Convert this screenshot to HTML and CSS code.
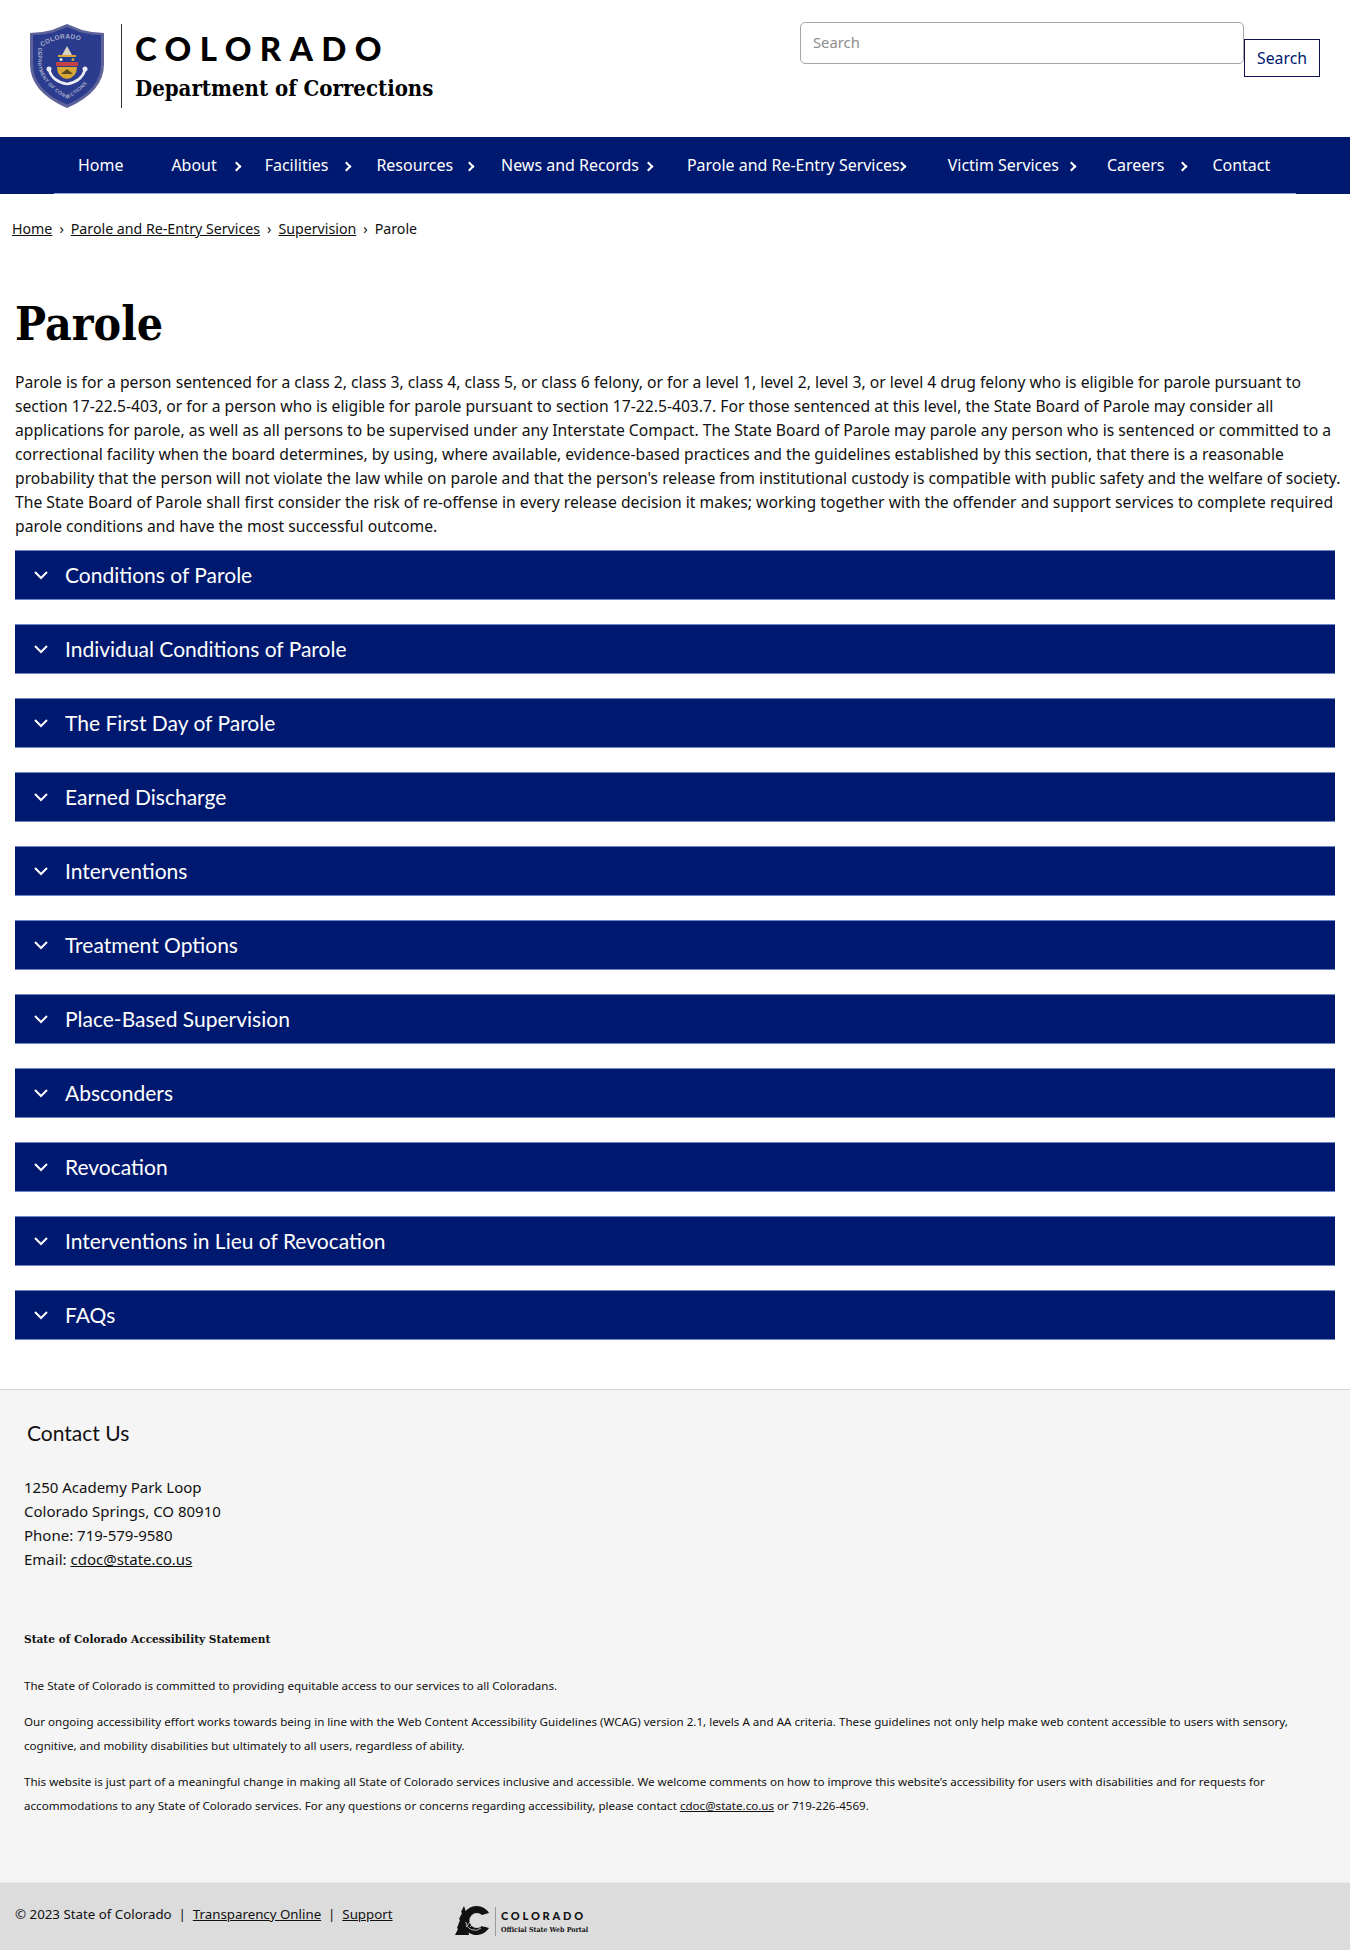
FILE: index.html
```html
<!DOCTYPE html>
<html lang="en">
<head>
<meta charset="utf-8">
<title>Parole | Colorado Department of Corrections</title>
<link rel="stylesheet" href="styles.css">
</head>
<body>
<header class="site-header">
  <a class="brand" href="#">
    <svg class="seal" viewBox="0 0 74 84" aria-hidden="true">
      <defs>
        <path id="seal-top" d="M9 25 Q37 4 65 25"/>
        <path id="seal-bottom" d="M8 24 V40 Q10 60 37 75 Q64 60 66 40 V24"/>
      </defs>
      <path d="M37 0 L52 6 Q63 9 74 9 V40 Q74 68 37 84 Q0 68 0 40 V9 Q11 9 22 6 Z" fill="#5d6398"/>
      <path d="M37 3 L51 8.500 Q62 11 71 11 V40 Q71 66 37 80.500 Q3 66 3 40 V11 Q12 11 23 8.500 Z" fill="#2b3b8d"/>
      <text class="seal-text"><textPath href="#seal-top" startOffset="6%">COLORADO</textPath></text>
      <text class="seal-text seal-small"><textPath href="#seal-bottom">DEPARTMENT OF CORRECTIONS</textPath></text>
      <path d="M37 22 L42 31 H32 Z" fill="#d8d2c0"/>
      <rect x="28" y="31" width="18" height="2" fill="#d7a33a"/>
      <rect x="26" y="33" width="22" height="5" fill="#1f3a92"/>
      <circle cx="31" cy="35.500" r="1.500" fill="#e9e5d8"/>
      <circle cx="43" cy="35.500" r="1.500" fill="#c9a33c"/>
      <rect x="26" y="38" width="22" height="4" fill="#c24246"/>
      <path d="M27 43 H47 Q47 53 37 55 Q27 53 27 43 Z" fill="#d9a735"/>
      <path d="M31 50 L37 45 L43 50 Z" fill="#5a4a22"/>
      <path d="M19 46 Q23 58 37 60 Q51 58 55 46" fill="none" stroke="#ecedf2" stroke-width="2.500"/>
      <circle cx="19" cy="45" r="2.500" fill="#ecedf2"/>
      <circle cx="55" cy="45" r="2.500" fill="#ecedf2"/>
    </svg>
    <span class="brand-text">
      <span class="brand-state">COLORADO</span>
      <span class="brand-dept">Department of Corrections</span>
    </span>
  </a>
  <form class="search">
    <input class="search-input" type="text" placeholder="Search">
    <button class="search-btn" type="button">Search</button>
  </form>
</header>

<nav class="main-nav">
  <ul class="nav-list">
    <li class="nav-item"><a href="#">Home</a></li>
    <li class="nav-item has-sub"><a href="#">About</a></li>
    <li class="nav-item has-sub"><a href="#">Facilities</a></li>
    <li class="nav-item has-sub"><a href="#">Resources</a></li>
    <li class="nav-item has-sub"><a href="#">News and Records</a></li>
    <li class="nav-item has-sub"><a href="#">Parole and Re-Entry Services</a></li>
    <li class="nav-item has-sub"><a href="#">Victim Services</a></li>
    <li class="nav-item has-sub"><a href="#">Careers</a></li>
    <li class="nav-item"><a href="#">Contact</a></li>
  </ul>
</nav>

<ol class="breadcrumb">
  <li><a href="#">Home</a></li>
  <li><a href="#">Parole and Re-Entry Services</a></li>
  <li><a href="#">Supervision</a></li>
  <li>Parole</li>
</ol>

<main class="content">
  <h1 class="page-title">Parole</h1>
  <p class="intro">Parole is for a person sentenced for a class 2, class 3, class 4, class 5, or class 6 felony, or for a level 1, level 2, level 3, or level 4 drug felony who is eligible for parole pursuant to section 17-22.5-403, or for a person who is eligible for parole pursuant to section 17-22.5-403.7. For those sentenced at this level, the State Board of Parole may consider all applications for parole, as well as all persons to be supervised under any Interstate Compact. The State Board of Parole may parole any person who is sentenced or committed to a correctional facility when the board determines, by using, where available, evidence-based practices and the guidelines established by this section, that there is a reasonable probability that the person will not violate the law while on parole and that the person's release from institutional custody is compatible with public safety and the welfare of society. The State Board of Parole shall first consider the risk of re-offense in every release decision it makes; working together with the offender and support services to complete required parole conditions and have the most successful outcome.</p>
  <div class="accordion">
    <div class="acc-row"><svg class="acc-icon" viewBox="0 0 14 9"><path d="M1 1 L7 7 L13 1"/></svg>Conditions of Parole</div>
    <div class="acc-row"><svg class="acc-icon" viewBox="0 0 14 9"><path d="M1 1 L7 7 L13 1"/></svg>Individual Conditions of Parole</div>
    <div class="acc-row"><svg class="acc-icon" viewBox="0 0 14 9"><path d="M1 1 L7 7 L13 1"/></svg>The First Day of Parole</div>
    <div class="acc-row"><svg class="acc-icon" viewBox="0 0 14 9"><path d="M1 1 L7 7 L13 1"/></svg>Earned Discharge</div>
    <div class="acc-row"><svg class="acc-icon" viewBox="0 0 14 9"><path d="M1 1 L7 7 L13 1"/></svg>Interventions</div>
    <div class="acc-row"><svg class="acc-icon" viewBox="0 0 14 9"><path d="M1 1 L7 7 L13 1"/></svg>Treatment Options</div>
    <div class="acc-row"><svg class="acc-icon" viewBox="0 0 14 9"><path d="M1 1 L7 7 L13 1"/></svg>Place-Based Supervision</div>
    <div class="acc-row"><svg class="acc-icon" viewBox="0 0 14 9"><path d="M1 1 L7 7 L13 1"/></svg>Absconders</div>
    <div class="acc-row"><svg class="acc-icon" viewBox="0 0 14 9"><path d="M1 1 L7 7 L13 1"/></svg>Revocation</div>
    <div class="acc-row"><svg class="acc-icon" viewBox="0 0 14 9"><path d="M1 1 L7 7 L13 1"/></svg>Interventions in Lieu of Revocation</div>
    <div class="acc-row"><svg class="acc-icon" viewBox="0 0 14 9"><path d="M1 1 L7 7 L13 1"/></svg>FAQs</div>
  </div>
</main>

<footer class="site-footer">
  <section class="footer-main">
    <h2 class="contact-title">Contact Us</h2>
    <address class="contact">
      1250 Academy Park Loop<br>
      Colorado Springs, CO 80910<br>
      Phone: 719-579-9580<br>
      Email: <a href="#">cdoc@state.co.us</a>
    </address>
    <h3 class="a11y-title">State of Colorado Accessibility Statement</h3>
    <p class="a11y">The State of Colorado is committed to providing equitable access to our services to all Coloradans.</p>
    <p class="a11y">Our ongoing accessibility effort works towards being in line with the Web Content Accessibility Guidelines (WCAG) version 2.1, levels A and AA criteria. These guidelines not only help make web content accessible to users with sensory, cognitive, and mobility disabilities but ultimately to all users, regardless of ability.</p>
    <p class="a11y">This website is just part of a meaningful change in making all State of Colorado services inclusive and accessible. We welcome comments on how to improve this website’s accessibility for users with disabilities and for requests for accommodations to any State of Colorado services. For any questions or concerns regarding accessibility, please contact <a href="#">cdoc@state.co.us</a> or 719-226-4569.</p>
  </section>
  <section class="footer-bar">
    <p class="legal">© 2023 State of Colorado &nbsp;|&nbsp; <a href="#">Transparency Online</a> &nbsp;|&nbsp; <a href="#">Support</a></p>
    <a class="portal" href="#">
      <svg class="portal-mark" viewBox="0 0 34 30" aria-hidden="true">
        <path d="M9 0 L11 6 L10 7 L13 13 L12 14 L14 29 H0 L3 23 L2 22 L5 14 L4 13 L7 7 L6 6 Z" fill="#111"/>
        <path d="M34 7 A14.500 14.500 0 1 0 34 22 L27 20 A7.500 7.500 0 1 1 27 9 Z" fill="#111"/>
        <path d="M11 21 L20 10 L29 21 M15 21 L23 12 M11 16 A9 9 0 0 0 26 22" fill="none" stroke="#e6e6e6" stroke-width="0.800"/>
      </svg>
      <span class="portal-text">
        <span class="portal-state">COLORADO</span>
        <span class="portal-sub">Official State Web Portal</span>
      </span>
    </a>
  </section>
</footer>
</body>
</html>
```
FILE: styles.css
```css
* { box-sizing: border-box; }
html, body { margin: 0; padding: 0; }
body {
  font-family: "Noto Sans", "Open Sans", sans-serif;
  font-size: 16px;
  line-height: 24px;
  color: #111;
  background: #fff;
}
a { color: inherit; }

.site-header {
  height: 137px;
  display: flex;
  justify-content: space-between;
  align-items: flex-start;
  padding: 22px 30px 0 30px;
}
.brand {
  display: flex;
  align-items: stretch;
  text-decoration: none;
  color: #000;
  padding-top: 2px;
}
.seal { width: 74px; height: 84px; display: block; }
.seal-text { font: 700 6.5px "Liberation Sans", sans-serif; fill: #a9adc9; letter-spacing: .3px; }
.seal-small { font-size: 5px; }
.brand-text {
  display: flex;
  flex-direction: column;
  margin-left: 17px;
  padding-left: 13px;
  border-left: 1.5px solid #333;
  height: 84px;
}
.brand-state {
  font-family: "Lato", sans-serif;
  font-weight: 900;
  font-size: 33px;
  line-height: 40px;
  letter-spacing: 8.4px;
  margin-top: 4px;
}
.brand-dept {
  font-family: "DejaVu Serif Condensed", "DejaVu Serif", serif;
  font-weight: 700;
  font-size: 22px;
  line-height: 28px;
  margin-top: 6px;
}
.search { display: flex; align-items: flex-start; }
.search-input {
  width: 444px;
  height: 42px;
  border: 1px solid #a6a6ad;
  border-radius: 5px;
  padding: 0 12px 2px;
  font: 14.8px "Noto Sans", sans-serif;
  background: #fff;
}
.search-input::placeholder { color: #8e8e8e; opacity: 1; }
.search-btn {
  width: 76px;
  height: 38px;
  margin-top: 17px;
  border: 1px solid #10124f;
  background: #fff;
  color: #001970;
  font: 15.8px "Noto Sans", sans-serif;
  padding: 0;
}

.main-nav {
  height: 57px;
  background: #001970;
}
.nav-list {
  list-style: none;
  margin: 0 54px;
  padding: 0;
  height: 57px;
  display: flex;
  border-bottom: 1px solid #8fa6d8;
  font-size: 15.96px;
}
.nav-item {
  position: relative;
  flex: none;
  white-space: nowrap;
  padding: 0 24px;
  line-height: 56px;
}
.nav-item a { color: #fff; text-decoration: none; }
.has-sub::after {
  content: "";
  position: absolute;
  left: calc(89.4% + 2px);
  top: 26px;
  width: 5px;
  height: 5px;
  border-top: 2px solid #fff;
  border-right: 2px solid #fff;
  transform: rotate(45deg);
}

.breadcrumb {
  list-style: none;
  margin: 0;
  padding: 24px 0 0 12px;
  display: flex;
  font-size: 14.2px;
  line-height: 22px;
}
.breadcrumb li + li::before {
  content: "›";
  margin: 0 7px;
}

.content { padding: 0 15px; }
.page-title {
  font-family: "DejaVu Serif Condensed", "DejaVu Serif", serif;
  font-weight: 700;
  font-size: 46px;
  line-height: 56px;
  margin: 56px 0 18px 0;
  color: #000;
}
.intro { margin: 0 -15px 0 0; font-size: 15.7px; }
.accordion {
  margin-top: 12px;
  display: flex;
  flex-direction: column;
  gap: 24px;
}
.acc-row {
  height: 50px;
  display: flex;
  align-items: center;
  background: #001970;
  border-top: 1px solid #6f86c4;
  border-bottom: 1px solid #6f86c4;
  color: #fff;
  font-family: "Lato", sans-serif;
  font-size: 21px;
  padding-left: 19px;
}
.acc-icon {
  width: 14px;
  height: 9px;
  margin-right: 17px;
  fill: none;
  stroke: #fff;
  stroke-width: 2;
}

.site-footer {
  margin-top: 49px;
  background: #f5f5f5;
  border-top: 1px solid #d4d4d4;
}
.footer-main {
  height: 492px;
  padding: 29px 24px 0 24px;
}
.contact-title {
  font-family: "Lato", sans-serif;
  font-weight: 400;
  font-size: 21px;
  line-height: 28px;
  margin: 0 0 0 3px;
}
.contact {
  font-style: normal;
  font-size: 15px;
  margin-top: 28px;
}
.a11y-title {
  font-family: "DejaVu Serif Condensed", "DejaVu Serif", serif;
  font-weight: 700;
  font-size: 11.75px;
  line-height: 20px;
  margin: 58px 0 25px 0;
}
.a11y {
  font-size: 11.6px;
  line-height: 24px;
  margin: 0 0 12px 0;
}
.footer-bar {
  height: 68px;
  background: #dcdcdc;
  border-top: 1px solid #e8e8e8;
  padding: 19px 0 0 15px;
  display: flex;
  align-items: flex-start;
}
.legal { margin: 0; font-size: 13.3px; line-height: 24px; width: 440px; }
.portal {
  display: flex;
  align-items: center;
  text-decoration: none;
  color: #111;
  margin-top: 4px;
}
.portal-mark { width: 34px; height: 30px; }
.portal-text {
  margin-left: 6px;
  padding-left: 5px;
  border-left: 1px solid #999;
  display: flex;
  flex-direction: column;
}
.portal-state { font-family: "Lato", sans-serif; font-weight: 900; font-size: 11px; line-height: 17px; letter-spacing: 2.8px; }
.portal-sub { font-family: "DejaVu Serif Condensed", "DejaVu Serif", serif; font-weight: 700; font-size: 7px; line-height: 12px; }
```
